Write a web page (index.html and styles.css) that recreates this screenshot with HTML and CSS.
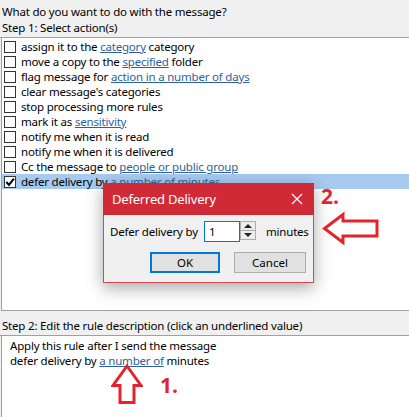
FILE: index.html
```html
<!DOCTYPE html>
<html lang="en">
<head>
    <meta charset="UTF-8">
    <title>Rules Wizard</title>
    <link rel="stylesheet" href="styles.css">
</head>
<body>
    <div class="wizard">
        <div class="prompt">
            <div>What do you want to do with the message?</div>
            <div>Step 1: Select action(s)</div>
        </div>

        <div class="actions">
            <div class="action"><span class="check"></span><span>assign it to the <a href="#">category</a> category</span></div>
            <div class="action"><span class="check"></span><span>move a copy to the <a href="#">specified</a> folder</span></div>
            <div class="action"><span class="check"></span><span>flag message for <a href="#">action in a number of days</a></span></div>
            <div class="action"><span class="check"></span><span>clear message's categories</span></div>
            <div class="action"><span class="check"></span><span>stop processing more rules</span></div>
            <div class="action"><span class="check"></span><span>mark it as <a href="#">sensitivity</a></span></div>
            <div class="action"><span class="check"></span><span>notify me when it is read</span></div>
            <div class="action"><span class="check"></span><span>notify me when it is delivered</span></div>
            <div class="action"><span class="check"></span><span>Cc the message to <a href="#">people or public group</a></span></div>
            <div class="action selected">
                <span class="check">
                    <svg width="10" height="10" viewBox="0 0 10 10"><path d="M1.3 5 L4 7.9 L8.9 1.6" fill="none" stroke="#000" stroke-width="2"/></svg>
                </span>
                <span>defer delivery by <a href="#">a number of minutes</a></span>
            </div>
        </div>

        <div class="prompt step2">Step 2: Edit the rule description (click an underlined value)</div>

        <div class="description">
            <div>Apply this rule after I send the message</div>
            <div>defer delivery by <a href="#">a number of</a> minutes</div>
        </div>
    </div>

    <!-- popup opened from the underlined value -->
    <div class="dialog">
        <div class="dialog-title">
            <span>Deferred Delivery</span>
            <svg width="12" height="12" viewBox="0 0 12 12"><path d="M1 1 L11 11 M11 1 L1 11" stroke="#fff" stroke-width="1.2"/></svg>
        </div>
        <div class="dialog-body">
            <div class="field">
                <span class="field-label">Defer delivery by</span>
                <span class="number">1</span>
                <span class="spinner">
                    <span class="spin up"></span>
                    <span class="spin down"></span>
                </span>
                <span class="unit">minutes</span>
            </div>
            <div class="buttons">
                <button class="btn default">OK</button>
                <button class="btn">Cancel</button>
            </div>
        </div>
    </div>

    <!-- red callouts -->
    <span class="mark mark-two">2.</span>
    <svg class="arrow arrow-left" width="58" height="34" viewBox="0 0 58 34">
        <path d="M2.5 17.5 L21 3.5 L21 10 L55 10 L55 25 L21 25 L21 31.5 Z" fill="none" stroke="#e3242b" stroke-width="3" stroke-linejoin="miter"/>
    </svg>
    <svg class="arrow arrow-up" width="32" height="41" viewBox="0 0 32 41">
        <path d="M16 2 L30 21.5 L23 21.5 L23 38.5 L9 38.5 L9 21.5 L2 21.5 Z" fill="none" stroke="#e3242b" stroke-width="3" stroke-linejoin="miter"/>
    </svg>
    <span class="mark mark-one">1.</span>
</body>
</html>
```

FILE: styles.css
```css
body {
    margin: 0;
    width: 409px;
    height: 417px;
    overflow: hidden;
    background: #f0f0f0;
    font-family: "Noto Sans", "Open Sans", sans-serif;
    font-size: 11.5px;
    letter-spacing: -0.2px;
    color: #000;
    position: relative;
}

a {
    color: #2e5f9e;
    text-decoration: underline;
}

.prompt {
    padding: 4px 2px 0;
    line-height: 16px;
    height: 33px;
    border-bottom: 1px solid #a0a0a0;
    box-sizing: content-box;
}

.actions {
    margin-left: 1px;
    height: 273px;
    padding-top: 1px;
    background: #fff;
    border-left: 1px solid #a0a0a0;
    border-bottom: 1px solid #a0a0a0;
    box-sizing: border-box;
}

.action {
    height: 15px;
    line-height: 15px;
    display: flex;
    align-items: center;
    padding-left: 2px;
    white-space: nowrap;
}

.action.selected {
    background: #a6cbef;
}

.check {
    width: 12px;
    height: 12px;
    flex-shrink: 0;
    border: 1px solid #333;
    background: #fff;
    box-sizing: border-box;
    margin-right: 5px;
    display: flex;
    align-items: center;
    justify-content: center;
}

.step2 {
    height: 17px;
    padding-top: 7px;
}

.description {
    margin-left: 1px;
    height: 81px;
    padding: 2px 8px 0;
    line-height: 15px;
    background: #fff;
    border-left: 1px solid #a0a0a0;
}

.dialog {
    position: absolute;
    left: 103px;
    top: 183px;
    width: 211px;
    background: #f0f0f0;
    border: 1px solid #d8464f;
    border-top: none;
    box-sizing: border-box;
    box-shadow: 0 5px 16px rgba(0, 0, 0, 0.35);
}

.dialog-title {
    height: 32px;
    background: #d12a37;
    color: #fff;
    display: flex;
    align-items: center;
    justify-content: space-between;
    padding: 0 11px 0 9px;
    margin: 0 -1px;
    font-size: 13px;
}

.dialog-body {
    padding: 6px 7px 9px 6px;
}

.field {
    display: flex;
    align-items: center;
    height: 21px;
    white-space: nowrap;
}

.field-label {
    width: 94px;
    flex-shrink: 0;
}

.number {
    width: 36px;
    height: 21px;
    flex-shrink: 0;
    line-height: 19px;
    padding-left: 4px;
    border: 1px solid #0078d7;
    background: #fff;
    box-sizing: border-box;
}

.spinner {
    width: 16px;
    height: 19px;
    flex-shrink: 0;
    margin-top: -2px;
    display: flex;
    flex-direction: column;
    border: 1px solid #adadad;
    background: #ececec;
    box-sizing: border-box;
}

.spin {
    flex: 1;
    position: relative;
}

.spin.up {
    border-bottom: 1px solid #adadad;
}

.spin::after {
    content: "";
    position: absolute;
    left: 3px;
    border-left: 4px solid transparent;
    border-right: 4px solid transparent;
}

.spin.up::after {
    top: 2px;
    border-bottom: 4px solid #222;
}

.spin.down::after {
    top: 2px;
    border-top: 4px solid #222;
}

.unit {
    margin-left: 10px;
}

.buttons {
    display: flex;
    justify-content: flex-end;
    gap: 14px;
    margin-top: 10px;
}

.btn {
    font: inherit;
    width: 72px;
    height: 21px;
    padding: 0;
    background: #e1e1e1;
    border: 1px solid #adadad;
    color: #000;
}

.btn.default {
    width: 70px;
    border: 2px solid #0078d7;
}

.mark {
    position: absolute;
    color: #e3242b;
    font-family: "Open Sans", sans-serif;
    font-weight: bold;
    font-size: 21px;
    line-height: 20px;
    letter-spacing: 0;
}

.mark-two {
    left: 321px;
    top: 186px;
}

.mark-one {
    left: 160px;
    top: 375px;
}

.arrow {
    position: absolute;
}

.arrow-left {
    left: 322px;
    top: 211px;
}

.arrow-up {
    left: 111px;
    top: 364px;
}
```
